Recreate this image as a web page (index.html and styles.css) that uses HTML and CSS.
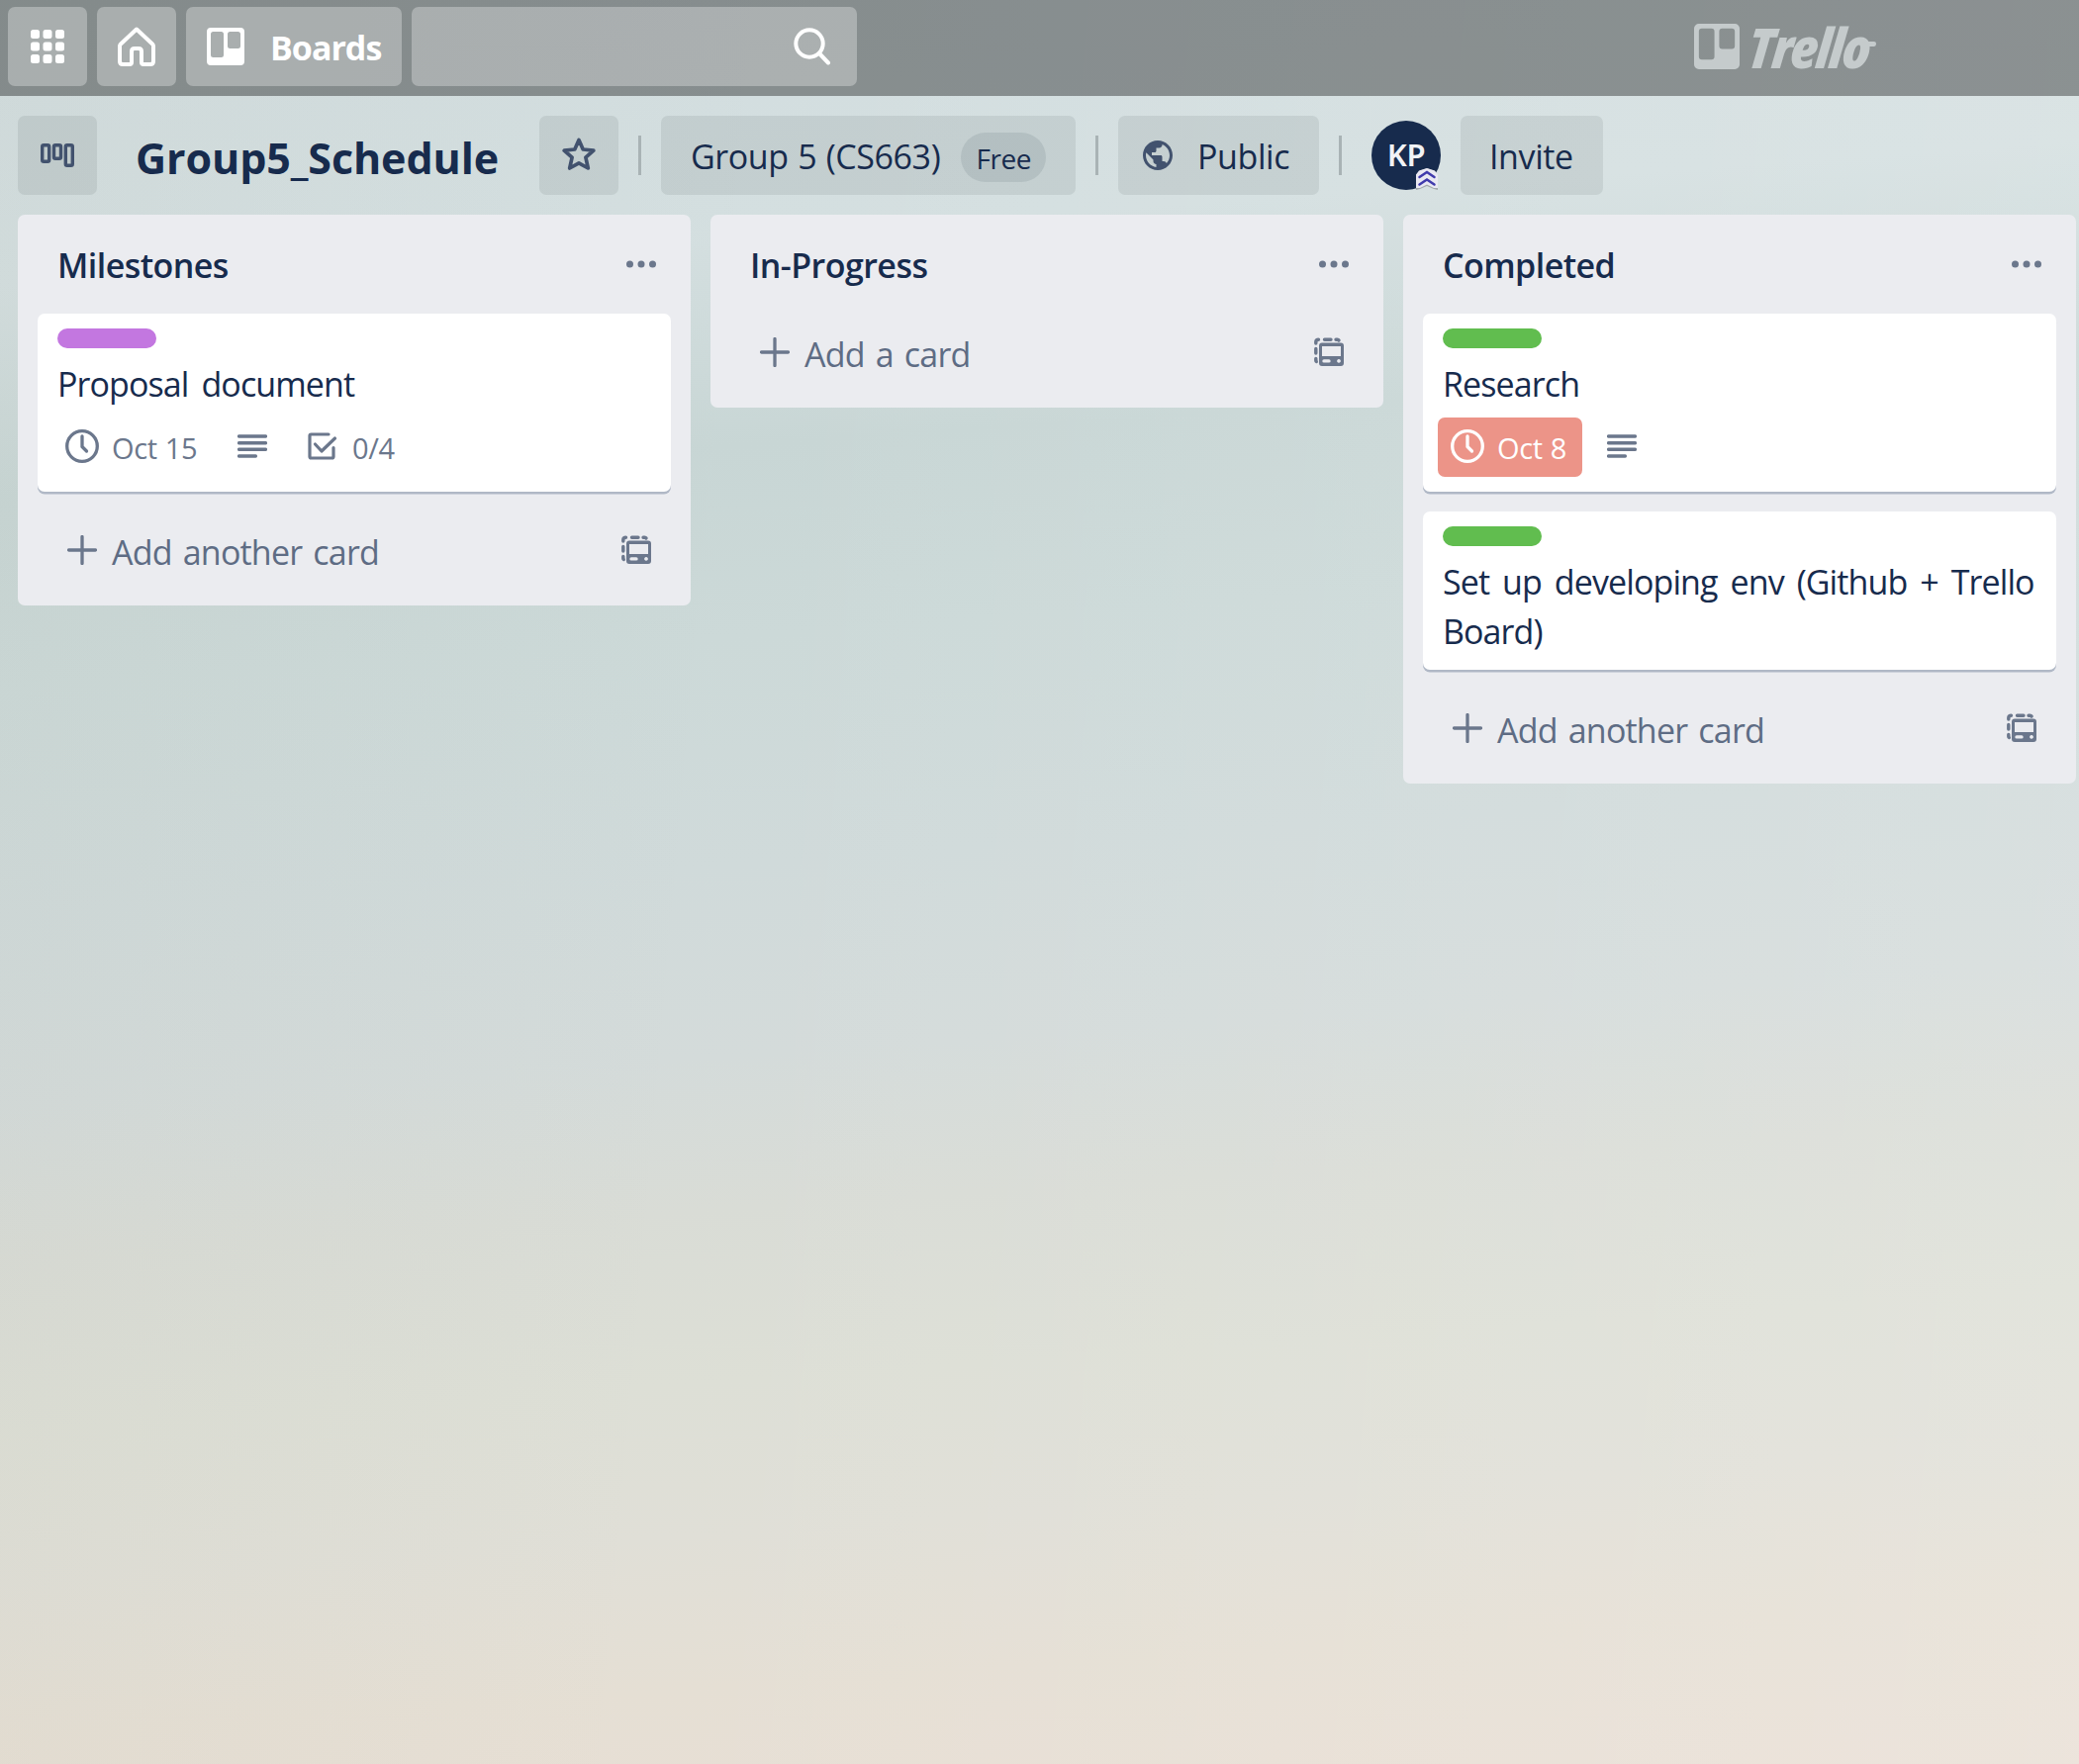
FILE: index.html
```html
<!DOCTYPE html>
<html lang="en">
<head>
<meta charset="utf-8">
<title>Group5_Schedule | Trello</title>
<link rel="stylesheet" href="styles.css">
</head>
<body>
<svg class="sprite" aria-hidden="true">
  <symbol id="i-plus" viewBox="0 0 30 30"><path d="M15 1.5v27M1.5 15h27" stroke="currentColor" stroke-width="3.3" stroke-linecap="round"/></symbol>
  <symbol id="i-dots" viewBox="0 0 30 8"><g fill="currentColor"><circle cx="3.5" cy="4" r="3.5"/><circle cx="15" cy="4" r="3.5"/><circle cx="26.5" cy="4" r="3.5"/></g></symbol>
  <symbol id="i-template" viewBox="0 0 30 30">
    <path d="M1.8 6V4.500Q1.8 2.2 4.500 2.2M10.500 2.2h6.500M22 2.2h1.500q1 0 1.500 .8M1.800 11.500v4.500M1.800 21.500v2q0 .8 .5 1" fill="none" stroke="currentColor" stroke-width="3.400" stroke-linecap="round"/>
    <path fill="currentColor" fill-rule="evenodd" d="M8 5.500h19a3 3 0 0 1 3 3V26a3 3 0 0 1-3 3H8a3 3 0 0 1-3-3V8.500a3 3 0 0 1 3-3zM8 9v10h19V9zM10 22.200a1.700 1.700 0 0 0 0 3.400h5a1.700 1.700 0 0 0 0-3.400zM25 22a1.900 1.900 0 1 0 .01 0z"/>
  </symbol>
  <symbol id="i-clock" viewBox="0 0 34 34"><g fill="none" stroke="currentColor" stroke-width="3.300" stroke-linecap="round" stroke-linejoin="round"><circle cx="17" cy="17" r="15.300"/><path d="M17 7v10.500l4.500 4.500"/></g></symbol>
  <symbol id="i-lines" viewBox="0 0 30 24"><path d="M1.600 2h26.800M1.600 8.700h26.800M1.600 15.300h26.800M1.600 22h16.800" stroke="currentColor" stroke-width="3.400" stroke-linecap="round"/></symbol>
  <symbol id="i-check" viewBox="0 0 30 28"><g fill="none" stroke="currentColor" stroke-width="3.200" stroke-linecap="round" stroke-linejoin="round"><path d="M21 2H3.500Q2 2 2 3.500v21Q2 26 3.500 26h21q1.500 0 1.500-1.500V15.500"/><path d="M7.500 12l6.500 7L27.500 6"/></g></symbol>
  <symbol id="i-board" viewBox="0 0 38 38"><path fill="currentColor" fill-rule="evenodd" d="M4 0h30a4 4 0 0 1 4 4v30a4 4 0 0 1-4 4H4a4 4 0 0 1-4-4V4a4 4 0 0 1 4-4zM6.500 4A2.500 2.500 0 0 0 4 6.500v21A2.500 2.500 0 0 0 6.500 30h8a2.500 2.500 0 0 0 2.500-2.500v-21A2.500 2.500 0 0 0 14.500 4zM23.500 4A2.500 2.500 0 0 0 21 6.500v12a2.500 2.500 0 0 0 2.500 2.500h8a2.500 2.500 0 0 0 2.500-2.500v-12A2.500 2.500 0 0 0 31.500 4z"/></symbol>
</svg>

<header class="topbar">
  <button class="top-btn square"><svg width="34" height="34" viewBox="0 0 34 34" fill="#fff"><rect width="9" height="9" rx="2.500"/><rect x="12.500" width="9" height="9" rx="2.500"/><rect x="25" width="9" height="9" rx="2.500"/><rect y="12.500" width="9" height="9" rx="2.500"/><rect x="12.500" y="12.500" width="9" height="9" rx="2.500"/><rect x="25" y="12.500" width="9" height="9" rx="2.500"/><rect y="25" width="9" height="9" rx="2.500"/><rect x="12.500" y="25" width="9" height="9" rx="2.500"/><rect x="25" y="25" width="9" height="9" rx="2.500"/></svg></button>
  <button class="top-btn square"><svg width="38" height="40" viewBox="0 0 38 40" fill="none" stroke="#fff" stroke-width="4" stroke-linejoin="round"><path d="M2 19.500Q2 18.500 3 17.500L19 2.500l16 15q1 1 1 2V35q0 3-3 3h-7q-2 0-2-2V25q0-3-3-3h-4q-3 0-3 3v11q0 2-2 2H5q-3 0-3-3z"/></svg></button>
  <button class="top-btn boards"><svg width="38" height="38"><use href="#i-board"/></svg><span>Boards</span></button>
  <div class="top-btn search"><svg width="38" height="38" viewBox="0 0 38 38" fill="none" stroke="#fff" stroke-width="4" stroke-linecap="round"><circle cx="16" cy="16" r="13.700"/><path d="M26 26l9 9.500"/></svg></div>
  <div class="logo"><svg width="46" height="46"><use href="#i-board"/></svg><span>Trello</span></div>
</header>

<nav class="board-head">
  <button class="btn view"><svg width="34" height="24" viewBox="0 0 34 24" fill="none" stroke="#42526e" stroke-width="3.400"><rect x="1.700" y="1.700" width="7" height="16.600" rx="1.500"/><rect x="13.500" y="1.700" width="7" height="13.600" rx="1.500"/><rect x="25.300" y="1.700" width="7" height="20.600" rx="1.500"/></svg></button>
  <h1 class="board-title">Group5_Schedule</h1>
  <button class="btn star"><svg width="34" height="34" viewBox="0 0 34 34" fill="none" stroke="#42526e" stroke-width="3.700" stroke-linejoin="round"><path d="M17 2.500l4.200 9.500 10.600 1.200-7.900 7 2.400 10.800L17 25.800 7.700 31l2.400-10.800-7.900-7L12.800 12z"/></svg></button>
  <i class="divider"></i>
  <button class="btn team"><span>Group 5 (CS663)</span><span class="pill">Free</span></button>
  <i class="divider"></i>
  <button class="btn public"><svg width="36" height="36" viewBox="0 0 24 24" fill="#42526e"><path d="M12 2C6.480 2 2 6.480 2 12s4.480 10 10 10 10-4.480 10-10S17.520 2 12 2zm-1 17.930c-3.950-.49-7-3.850-7-7.930 0-.62.08-1.210.21-1.790L9 15v1c0 1.100.9 2 2 2v1.930zm6.900-2.540c-.26-.81-1-1.390-1.900-1.390h-1v-3c0-.55-.45-1-1-1H8v-2h2c.55 0 1-.45 1-1V7h2c1.100 0 2-.9 2-2v-.41c2.930 1.190 5 4.060 5 7.410 0 2.080-.8 3.970-2.100 5.390z"/></svg><span>Public</span></button>
  <i class="divider"></i>
  <div class="avatar">KP<svg class="admin" width="22" height="22" viewBox="0 0 22 22"><path d="M4 2.500L11 0l7 2.500 4 4.500v15l-4-1-7-3-7 3-4 1V7z" fill="#a4a9ac"/><path d="M3 2.500L11 0l8 2.500 3 4V20h-4l-7-3.500L4 20H0V6.500z" fill="#e9e8f2"/><path d="M3.500 9L11 4l7.500 5M3.500 16.500L11 11.500l7.500 5" fill="none" stroke="#403aac" stroke-width="2.500" stroke-linecap="round"/></svg></div>
  <button class="btn invite"><span>Invite</span></button>
</nav>

<main class="lists">
  <section class="list">
    <div class="list-head"><h2>Milestones</h2><svg class="dots" width="30" height="8"><use href="#i-dots"/></svg></div>
    <article class="card">
      <div class="label purple"></div>
      <p class="title">Proposal document</p>
      <div class="badges">
        <span class="badge due"><svg width="34" height="34"><use href="#i-clock"/></svg><span>Oct 15</span></span>
        <span class="badge desc"><svg width="30" height="24"><use href="#i-lines"/></svg></span>
        <span class="badge checks"><svg width="30" height="28"><use href="#i-check"/></svg><span>0/4</span></span>
      </div>
    </article>
    <div class="add"><svg width="30" height="30"><use href="#i-plus"/></svg><span>Add another card</span><svg class="template" width="30" height="30"><use href="#i-template"/></svg></div>
  </section>
  <section class="list">
    <div class="list-head"><h2>In-Progress</h2><svg class="dots" width="30" height="8"><use href="#i-dots"/></svg></div>
    <div class="add"><svg width="30" height="30"><use href="#i-plus"/></svg><span>Add a card</span><svg class="template" width="30" height="30"><use href="#i-template"/></svg></div>
  </section>
  <section class="list">
    <div class="list-head"><h2>Completed</h2><svg class="dots" width="30" height="8"><use href="#i-dots"/></svg></div>
    <article class="card">
      <div class="label green"></div>
      <p class="title">Research</p>
      <div class="badges">
        <span class="badge due overdue"><svg width="34" height="34"><use href="#i-clock"/></svg><span>Oct 8</span></span>
        <span class="badge desc"><svg width="30" height="24"><use href="#i-lines"/></svg></span>
      </div>
    </article>
    <article class="card">
      <div class="label green"></div>
      <p class="title">Set up developing env (Github + Trello Board)</p>
    </article>
    <div class="add"><svg width="30" height="30"><use href="#i-plus"/></svg><span>Add another card</span><svg class="template" width="30" height="30"><use href="#i-template"/></svg></div>
  </section>
</main>
</body>
</html>
```
FILE: styles.css
```css
* { box-sizing: border-box; }
html, body { margin: 0; height: 100%; }
body {
  overflow: hidden;
  font-family: "Open Sans", "Noto Sans", sans-serif;
  font-size: 34px;
  line-height: 50px;
  letter-spacing: -0.4px;
  color: #172b4d;
  background:
    linear-gradient(95deg, rgba(150, 150, 130, .06) 0%, rgba(255, 255, 255, 0) 35%, rgba(255, 255, 255, .16) 100%),
    linear-gradient(176deg, #d2dddf 0%, #d4dfe0 15%, #c8d6d5 26%, #ccd9d8 36%, #d0dada 48%, #d4dbda 58%, #d9dcd6 66%, #dddfd6 75%, #e0dfd7 83%, #e5dfd4 91%, #e9dfd5 100%);
}
button { border: 0; padding: 0; margin: 0; font: inherit; letter-spacing: inherit; color: inherit; }
svg { display: block; flex: none; }
.sprite { display: none; }

.topbar {
  display: flex;
  gap: 10px;
  height: 97px;
  padding: 7px 8px 10px;
  background: rgba(0, 0, 0, .36);
}
.top-btn {
  display: flex;
  align-items: center;
  height: 80px;
  border-radius: 7px;
  background: rgba(255, 255, 255, .3);
  color: #fff;
}
.square { width: 80px; justify-content: center; }
.boards { width: 218px; padding-left: 21px; gap: 26px; font-weight: 700; letter-spacing: -1px; }
.boards span { padding-top: 2px; }
.search { width: 450px; justify-content: flex-end; padding-right: 26px; }
.logo {
  display: flex;
  align-items: center;
  margin-left: 836px;
  gap: 9px;
  height: 80px;
  color: #c5cbcc;
}
.logo span {
  position: relative;
  font-size: 56px;
  font-weight: 800;
  font-style: italic;
  line-height: 60px;
  letter-spacing: -3px;
  transform: scaleX(.87) skewX(-7deg);
  transform-origin: left center;
}
/* tail of the last letter */
.logo span::after {
  content: "";
  position: absolute;
  right: -8px;
  top: 25px;
  width: 16px;
  height: 5px;
  border-radius: 3px;
  background: #c5cbcc;
}

.board-head { display: flex; align-items: center; height: 120px; padding-left: 18px; }
.btn {
  display: flex;
  align-items: center;
  height: 80px;
  border-radius: 7px;
  background: rgba(9, 30, 20, .08);
}
.btn span { padding-top: 2px; }
.view, .star { width: 80px; justify-content: center; }
.board-title {
  width: 408px;
  margin: 5px 0 0 39px;
  font-size: 43px;
  font-weight: 700;
  letter-spacing: -0.1px;
}
.star svg { margin-top: -2px; }
.divider { width: 3px; height: 40px; margin: 0 20px; background: #a9b3b5; }
.team { width: 419px; padding-left: 30px; gap: 21px; word-spacing: 1px; }
.btn .pill {
  width: 86px;
  height: 50px;
  padding: 1px 0 0;
  margin-top: 4px;
  border-radius: 25px;
  background: rgba(9, 30, 40, .09);
  font-size: 28px;
  text-align: center;
}
.public { width: 203px; padding-left: 22px; gap: 22px; }
.avatar {
  position: relative;
  width: 70px;
  height: 70px;
  margin: 0 20px 0 10px;
  border-radius: 50%;
  background: #172b4d;
  color: #f2f3f6;
  font: 600 31px/68px "Noto Sans", sans-serif;
  text-align: center;
}
.admin { position: absolute; right: 3px; bottom: 0; }
.invite { width: 144px; padding-left: 29px; }

.lists { display: flex; align-items: flex-start; gap: 20px; padding-left: 18px; }
.list { flex: none; width: 680px; padding: 0 20px; border-radius: 7px; background: #ebecf0; }
.list-head { display: flex; justify-content: space-between; height: 100px; padding: 26px 15px 0 20px; }
.list-head h2 { margin: 0; font-size: 34px; font-weight: 600; letter-spacing: -0.55px; }
.dots, .add { color: #6b778c; }
.dots { margin-top: 20px; }
.card {
  margin-bottom: 20px;
  padding: 15px 20px 14px;
  border-radius: 7px;
  background: #fff;
  box-shadow: 0 2.5px 0 #b0b8c6;
}
.label { width: 100px; height: 20px; border-radius: 10px; }
.purple { background: #c377e0; }
.green { background: #61bd4f; }
.title { margin: 11px -10px 0 0; letter-spacing: -0.9px; word-spacing: 5px; }
.badges { display: flex; margin: 9px 0 1px -5px; color: #6b778c; font-size: 29px; word-spacing: 1px; }
.badge { display: flex; align-items: center; height: 60px; }
.badge svg { margin-top: -2px; }
.badge span { padding-top: 2px; }
.due { padding: 0 16px 0 13px; gap: 13px; margin-right: 25px; border-radius: 7px; }
.overdue { background: #ec9488; color: #fff; }
.desc { margin-right: 41px; }
.checks { gap: 15px; }
.add { display: flex; height: 95px; padding: 16px 20px 0 30px; }
.add svg { margin-top: 8px; }
.add span { margin-left: 15px; color: #5e6c84; letter-spacing: -0.8px; word-spacing: 3px; }
.add .template { margin-left: auto; }
```
